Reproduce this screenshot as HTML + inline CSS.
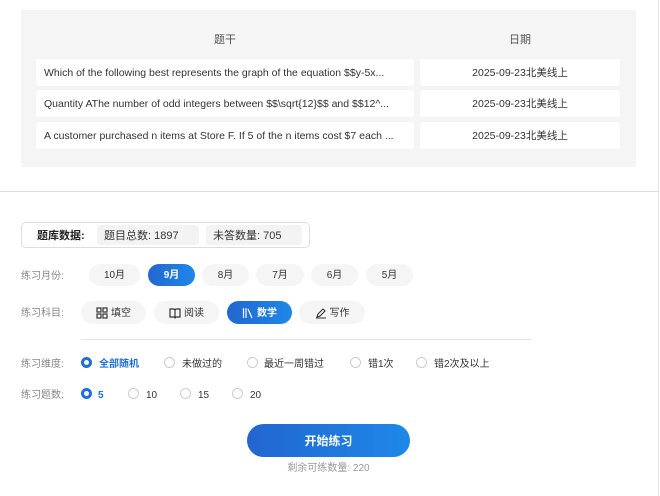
<!DOCTYPE html>
<html><head><meta charset="utf-8"><style>
*{margin:0;padding:0;box-sizing:border-box}
body{width:660px;height:496px;background:#fff;font-family:"Liberation Sans","Noto Sans CJK SC",sans-serif;position:relative;overflow:hidden;color:#333}
.a{position:absolute}
.panel{left:21px;top:10px;width:615px;height:157px;background:#f5f5f5}
.h{top:33px;font-size:11px;color:#555;line-height:14px}
.cell{background:#fff;border-radius:3px;height:27px;line-height:28px;font-size:10.5px;color:#333;white-space:nowrap;overflow:hidden}
.l{left:36px;width:378px;padding-left:8px}
.r{left:420px;width:200px;text-align:center}
.lab{font-size:10px;color:#888;left:21px;line-height:12px}
.pill{top:264px;height:22px;line-height:23px;border-radius:11px;background:#f5f5f5;text-align:center;font-size:10px;color:#333}
.sp{top:301px;height:23px;line-height:23px;border-radius:12px;background:#f5f5f5;font-size:10px;display:flex;align-items:center;justify-content:center;gap:3px;color:#333;padding-top:1px}
.a.on{background:linear-gradient(90deg,#2266d0,#1e88e8);color:#fff;font-weight:bold}
.rd{width:11px;height:11px;border-radius:50%;border:1px solid #ccc;background:#fff}
.rd.s{border:3px solid #1e6fd6}
.t{font-size:10px;color:#333;line-height:12px}
.tb{color:#1e6fd6;font-weight:bold}
</style></head><body>
<div class="a" style="left:658px;top:0;width:1px;height:496px;background:#e3e3e3"></div>
<div class="a panel"></div>
<div class="a h" style="left:214px">题干</div>
<div class="a h" style="left:509px">日期</div>
<div class="a cell l" style="top:59px">Which of the following best represents the graph of the equation $$y-5x...</div>
<div class="a cell r" style="top:59px">2025-09-23北美线上</div>
<div class="a cell l" style="top:90px">Quantity AThe number of odd integers between $$\sqrt{12}$$ and $$12^...</div>
<div class="a cell r" style="top:90px">2025-09-23北美线上</div>
<div class="a cell l" style="top:122px">A customer purchased n items at Store F. If 5 of the n items cost $7 each ...</div>
<div class="a cell r" style="top:122px">2025-09-23北美线上</div>
<div class="a" style="left:0;top:191px;width:658px;height:1px;background:#ddd"></div>

<div class="a" style="left:21px;top:222px;width:289px;height:26px;border:1px solid #ddd;border-radius:5px"></div>
<div class="a" style="left:37px;top:229px;font-size:11px;font-weight:bold;color:#222;line-height:14px">题库数据:</div>
<div class="a" style="left:97px;top:225px;width:102px;height:20px;background:#f3f3f3;border-radius:3px;font-size:11px;line-height:22px;padding-left:7px;color:#333">题目总数: 1897</div>
<div class="a" style="left:206px;top:225px;width:96px;height:20px;background:#f3f3f3;border-radius:3px;font-size:11px;line-height:22px;padding-left:7px;color:#333">未答数量: 705</div>

<div class="a lab" style="top:271px">练习月份:</div>
<div class="a pill" style="left:89px;width:51px">10月</div>
<div class="a pill on" style="left:148px;width:47px">9月</div>
<div class="a pill" style="left:202px;width:47px">8月</div>
<div class="a pill" style="left:256px;width:48px">7月</div>
<div class="a pill" style="left:311px;width:47px">6月</div>
<div class="a pill" style="left:366px;width:47px">5月</div>

<div class="a lab" style="top:308px">练习科目:</div>
<div class="a sp" style="left:81px;width:65px"><svg width="12" height="12" viewBox="0 0 12 12" fill="none" stroke="#333" stroke-width="1.2"><rect x="1" y="1" width="4" height="4"/><rect x="7" y="1" width="4" height="4"/><rect x="1" y="7" width="4" height="4"/><rect x="7" y="7" width="4" height="4"/></svg>填空</div>
<div class="a sp" style="left:154px;width:65px"><svg width="12" height="12" viewBox="0 0 12 12" fill="none" stroke="#333" stroke-width="1.2"><path d="M1 2h4l1 1 1-1h4v8H7l-1 1-1-1H1z M6 3v8"/></svg>阅读</div>
<div class="a sp on" style="left:227px;width:65px"><svg width="12" height="12" viewBox="0 0 12 12" fill="none" stroke="#fff" stroke-width="1.2"><path d="M1.5 1v10M4 1v10M6 2l4 9"/></svg>数学</div>
<div class="a sp" style="left:299px;width:66px"><svg width="12" height="12" viewBox="0 0 12 12" fill="none" stroke="#333" stroke-width="1.1"><path d="M2 10l1-3 5-5 2 2-5 5z M1 11h10"/></svg>写作</div>
<div class="a" style="left:81px;top:339px;width:451px;height:1px;background:#e5e5e5"></div>

<div class="a lab" style="top:359px">练习维度:</div>
<div class="a rd s" style="left:81px;top:357px"></div><div class="a t tb" style="left:99px;top:359px">全部随机</div>
<div class="a rd" style="left:164px;top:357px"></div><div class="a t" style="left:182px;top:359px">未做过的</div>
<div class="a rd" style="left:247px;top:357px"></div><div class="a t" style="left:264px;top:359px">最近一周错过</div>
<div class="a rd" style="left:350px;top:357px"></div><div class="a t" style="left:368px;top:359px">错1次</div>
<div class="a rd" style="left:416px;top:357px"></div><div class="a t" style="left:434px;top:359px">错2次及以上</div>

<div class="a lab" style="top:390px">练习题数:</div>
<div class="a rd s" style="left:81px;top:388px"></div><div class="a t tb" style="left:98px;top:390px">5</div>
<div class="a rd" style="left:128px;top:388px"></div><div class="a t" style="left:146px;top:390px">10</div>
<div class="a rd" style="left:180px;top:388px"></div><div class="a t" style="left:198px;top:390px">15</div>
<div class="a rd" style="left:232px;top:388px"></div><div class="a t" style="left:250px;top:390px">20</div>

<div class="a on" style="left:247px;top:424px;width:163px;height:33px;border-radius:17px;text-align:center;line-height:34px;font-size:12px">开始练习</div>
<div class="a" style="left:247px;width:163px;top:463px;text-align:center;font-size:10px;color:#999;line-height:12px">剩余可练数量: 220</div>
</body></html>
